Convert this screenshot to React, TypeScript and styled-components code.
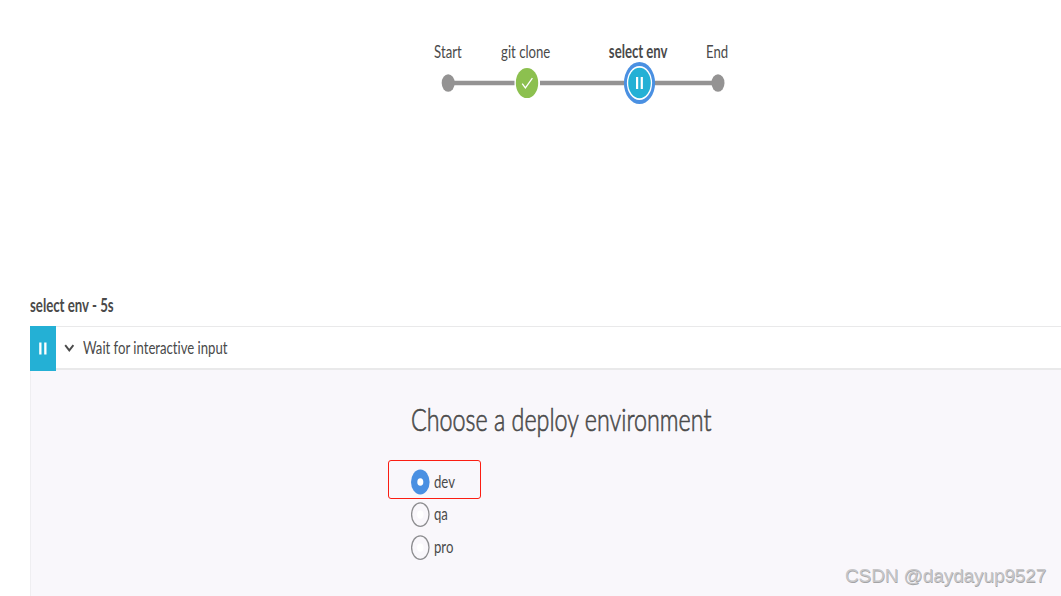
import React, { useState } from 'react'
import styled, { createGlobalStyle } from 'styled-components'

const COLOR = {
  TEXT: '#4a4a4a',
  LINE: '#949393',
  SUCCESS: '#8cc04f',
  PAUSED: '#24b0d5',
  SELECTED: '#4a90e2',
  PANEL: '#f9f7fb',
  BORDER: '#e9e9ea',
  MARKER: '#fb1d12',
}

const GlobalStyle = createGlobalStyle`
  body {
    margin: 0;
    background: #fff;
    color: ${COLOR.TEXT};
    font-family: Lato, 'Liberation Sans', sans-serif;
    font-variant-ligatures: none;
  }
`

const StyledPage = styled.main`
  height: 596px;
  display: flex;
  flex-direction: column;
  overflow: hidden;
`

interface CondensedProps {
  $size: number
  $ratio: number
  $weight?: number
  $center?: boolean
}

const Condensed = styled.span<CondensedProps>`
  display: inline-block;
  white-space: nowrap;
  font-size: ${({ $size }): number => $size}px;
  font-weight: ${({ $weight = 400 }): number => $weight};
  transform: scaleX(${({ $ratio }): number => $ratio});
  transform-origin: ${({ $center }): string => ($center ? 'center' : 'left')};
`

const StyledPipeline = styled.section`
  height: 253px;
  padding: 41px 0 0 428px;
`

const StyledLabels = styled.div`
  display: flex;
`

const StyledLabel = styled.div<{ $width: number; $gap: number }>`
  width: ${({ $width }): number => $width}px;
  margin-right: ${({ $gap }): number => $gap}px;
  display: flex;
  flex-shrink: 0;
  justify-content: center;
  line-height: 21px;
`

const StyledGraph = styled.svg`
  display: block;
`

const StyledStepsTitle = styled.h2`
  height: 32px;
  margin: 0;
  padding-left: 30px;
  font-size: 18px;
  line-height: 22px;
`

const StyledStep = styled.section`
  flex: 1;
  margin-left: 30px;
  display: flex;
  flex-direction: column;
`

const StyledStepHeader = styled.header`
  height: 44px;
  display: flex;
  flex-shrink: 0;
  cursor: pointer;
`

const StyledStepStatus = styled.div`
  width: 26px;
  height: 45px;
  display: flex;
  align-items: center;
  justify-content: center;
  background: ${COLOR.PAUSED};
  z-index: 1;
`

const StyledStepBar = styled.div`
  flex: 1;
  height: 41px;
  padding-left: 8px;
  display: flex;
  align-items: center;
  gap: 8px;
  border-top: 1px solid ${COLOR.BORDER};
  border-bottom: 2px solid ${COLOR.BORDER};
  box-shadow: 0 1px ${COLOR.PANEL};

  ${Condensed} {
    margin-bottom: 2px;
  }
`

const StyledStepBody = styled.div`
  flex: 1;
  padding: 29px 0 0 380px;
  background: ${COLOR.PANEL};
  border-left: 1px solid #efeef1;
`

const StyledQuestion = styled.h3`
  height: 61px;
  margin: 0;
  line-height: 40px;
  -webkit-text-stroke: 0.65px ${COLOR.TEXT};
`

const StyledOptions = styled.div`
  margin-left: -23px;
  display: flex;
  flex-direction: column;
`

const StyledOption = styled.label<{ $marked: boolean }>`
  width: 93px;
  height: ${({ $marked }): number => ($marked ? 39 : 33)}px;
  box-sizing: border-box;
  margin-bottom: ${({ $marked }): number => ($marked ? -3 : 0)}px;
  padding: 5px 0 0 ${({ $marked }): number => ($marked ? 22 : 23)}px;
  display: flex;
  align-items: center;
  gap: 4px;
  border: ${({ $marked }): string =>
    $marked ? `1px solid ${COLOR.MARKER}` : '0'};
  border-radius: 3px;
  line-height: 22px;
  cursor: pointer;

  input {
    position: absolute;
    opacity: 0;
  }

  ${Condensed} {
    margin-bottom: ${({ $marked }): number => ($marked ? 3 : 4)}px;
  }
`

const StyledFooter = styled.footer`
  position: absolute;
  top: 564px;
  left: 845px;
  color: #c6c6c8;
  font-family: 'Liberation Sans', Arial, sans-serif;
  font-size: 19px;
  letter-spacing: -0.1px;
  line-height: 23px;
  white-space: nowrap;
  text-shadow: 0.5px 0.5px 0 #a4a4a6;
`

interface Stage {
  name: string
  width: number
  gap: number
}

const STAGES: Stage[] = [
  { name: 'Start', width: 39, gap: 28 },
  { name: 'git clone', width: 61, gap: 42 },
  { name: 'select env', width: 80, gap: 19 },
  { name: 'End', width: 40, gap: 0 },
]

const ENVIRONMENTS = ['dev', 'qa', 'pro']

const PauseIcon: React.FC = () => (
  <svg width="10" height="13" viewBox="0 0 10 13">
    <path d="M1.2 .5h2.3v12H1.2zM6.2 .5h2.3v12H6.2z" fill="#fff" />
  </svg>
)

const Chevron: React.FC<{ open: boolean }> = ({ open }) => (
  <svg width="11" height="9" viewBox="0 0 11 9">
    <path
      d={open ? 'M1.2 2.2l4.1 5.2 4.1-5.2' : 'M3 .7l4.1 3.8L3 8.3'}
      fill="none"
      stroke={COLOR.TEXT}
      strokeWidth="1.9"
    />
  </svg>
)

const RadioIcon: React.FC<{ checked: boolean }> = ({ checked }) => (
  <svg width="19" height="26" viewBox="0 0 19 26">
    {checked ? (
      <>
        <ellipse cx="9.3" cy="13" rx="9.3" ry="12.5" fill={COLOR.SELECTED} />
        <ellipse cx="9.3" cy="13" rx="3" ry="3.8" fill="#fff" />
      </>
    ) : (
      <>
        <ellipse
          cx="9.3"
          cy="12.6"
          rx="8.7"
          ry="11.8"
          fill={COLOR.PANEL}
          stroke="#8d8d90"
          strokeWidth="1.3"
        />
        <ellipse cx="9.3" cy="12.6" rx="3.2" ry="4.2" fill="#fff" />
      </>
    )}
  </svg>
)

const PipelineGraph: React.FC = () => (
  <StyledGraph width="310" height="46" viewBox="0 0 310 46">
    <path d="M20 21h66.5M112 21h84M226 21h64" stroke={COLOR.LINE} strokeWidth="4.6" />
    <ellipse cx="20.2" cy="21" rx="6.5" ry="8.8" fill={COLOR.LINE} />
    <ellipse cx="290" cy="21" rx="6.5" ry="8.8" fill={COLOR.LINE} />
    <ellipse cx="99" cy="21" rx="11.2" ry="15.1" fill={COLOR.SUCCESS} />
    <path
      d="M94.2 21.6l3.2 4.4 7-9.8"
      fill="none"
      stroke="#fff"
      strokeWidth="1.3"
    />
    <ellipse cx="211.5" cy="21" rx="15.6" ry="21" fill={COLOR.SELECTED} />
    <ellipse cx="211.5" cy="21" rx="12.6" ry="17" fill="#fff" />
    <ellipse cx="211.5" cy="21" rx="11.3" ry="15.2" fill={COLOR.PAUSED} />
    <path d="M208 15h2.2v12H208zM212.7 15h2.2v12h-2.2z" fill="#fff" />
  </StyledGraph>
)

const App: React.FC = () => {
  const [environment, setEnvironment] = useState('dev')
  const [open, setOpen] = useState(true)

  return (
    <StyledPage>
      <GlobalStyle />
      <StyledPipeline>
        <StyledLabels>
          {STAGES.map(({ name, width, gap }) => (
            <StyledLabel key={name} $width={width} $gap={gap}>
              <Condensed
                $size={18}
                $ratio={0.73}
                $weight={name === 'select env' ? 700 : 400}
                $center
              >
                {name}
              </Condensed>
            </StyledLabel>
          ))}
        </StyledLabels>
        <PipelineGraph />
      </StyledPipeline>

      <StyledStepsTitle>
        <Condensed $size={18} $ratio={0.735} $weight={700}>
          select env - 5s
        </Condensed>
      </StyledStepsTitle>

      <StyledStep>
        <StyledStepHeader onClick={(): void => setOpen(!open)}>
          <StyledStepStatus>
            <PauseIcon />
          </StyledStepStatus>
          <StyledStepBar>
            <Chevron open={open} />
            <Condensed $size={18} $ratio={0.73}>
              Wait for interactive input
            </Condensed>
          </StyledStepBar>
        </StyledStepHeader>

        {open && (
          <StyledStepBody>
            <StyledQuestion>
              <Condensed $size={31} $ratio={0.752} $weight={300}>
                Choose a deploy environment
              </Condensed>
            </StyledQuestion>
            <StyledOptions>
              {ENVIRONMENTS.map(name => (
                <StyledOption key={name} $marked={name === 'dev'}>
                  <input
                    type="radio"
                    name="environment"
                    checked={name === environment}
                    onChange={(): void => setEnvironment(name)}
                  />
                  <RadioIcon checked={name === environment} />
                  <Condensed $size={18} $ratio={0.73}>
                    {name}
                  </Condensed>
                </StyledOption>
              ))}
            </StyledOptions>
          </StyledStepBody>
        )}
      </StyledStep>

      <StyledFooter>CSDN @daydayup9527</StyledFooter>
    </StyledPage>
  )
}

export default App
